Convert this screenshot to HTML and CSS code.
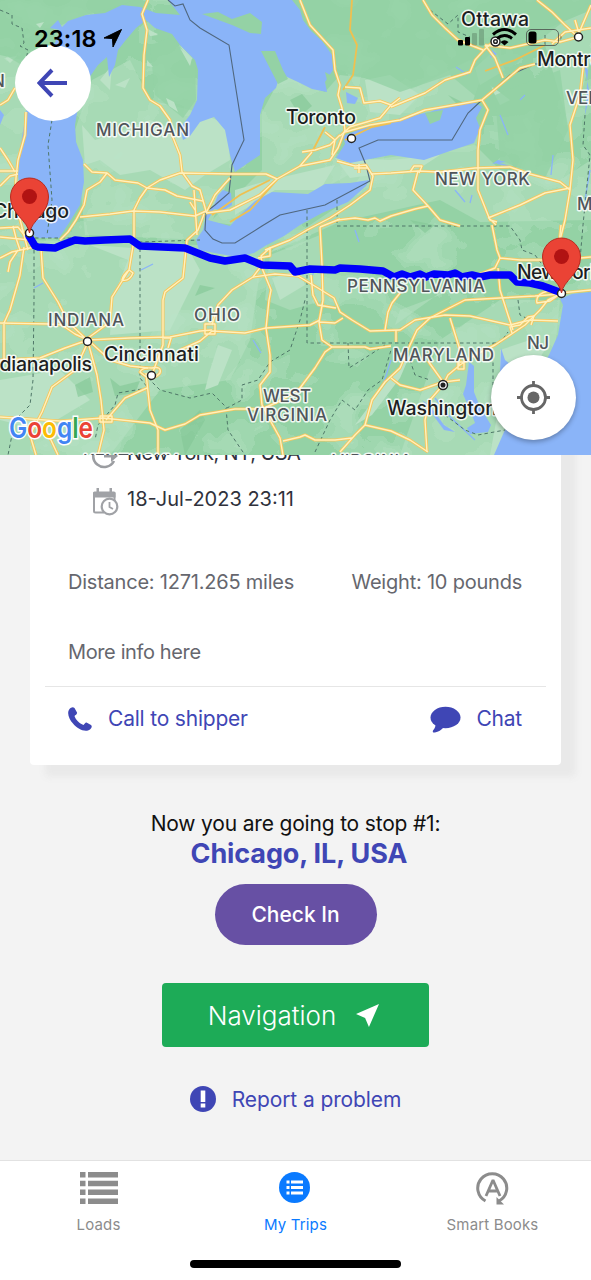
FILE: index.html
```html
<!DOCTYPE html>
<html lang="en">
<head>
<meta charset="utf-8">
<title>My Trips</title>
<link rel="stylesheet" href="styles.css">
</head>
<body>
<div class="screen">
  <header class="map-panel">
    <svg class="map" viewBox="0 0 591 455" width="591" height="455">
      <defs>
        <filter id="terrain" x="0" y="0" width="100%" height="100%" color-interpolation-filters="sRGB">
          <feTurbulence type="fractalNoise" baseFrequency="0.022 0.026" numOctaves="3" seed="8"/>
          <feColorMatrix values="0 0 0 0 .73  0 0 0 0 .89  0 0 0 0 .78  1 0 0 0 0"/>
          <feComponentTransfer><feFuncA type="discrete" tableValues="0 0 0 0 0 0 .3 .45 .6 .6 .6"/></feComponentTransfer>
        </filter>
        <g id="roads">
          <path d="M148 0L142 14L147 30L144 55L143 88L150 100L160 106L170 120L172 135L180 155L182 172L192 186L200 190L206 211"/>
          <path d="M84 164L92 172L107 173L115 180L138 183L147 188L165 190L177 196L203 201"/>
          <path d="M107 173L100 182L87 190L84 205L76 220L68 232L60 240"/>
          <path d="M147 188L160 180L180 173L232 174L266 174L277 179"/>
          <path d="M80 217L110 214L133 211L160 212L195 216L206 211M194 190L197 235M190 202L195 210"/>
          <path d="M147 188L140 198L134 210L134 240L129 270L112 297L110 322L88 338M129 270Q123 275 122 280Q129 282 133 273Z"/>
          <path d="M0 105L8 100L15 88M26 112L25 135L18 160L16 178L15 200L24 235M0 148L8 160L15 172M0 171L18 171M0 186L10 176L18 174"/>
          <path d="M0 323L50 324L62 325L75 334L88 340M41 248L43 278L58 302L68 322L85 338M24 247L20 275L10 310L4 323L4 360"/>
          <path d="M0 258L12 252L34 247M0 237L30 240M8 272L10 262L18 250M13 226L16 238L20 250M0 228L18 227L32 245M22 228L28 250"/>
          <path d="M0 360L40 358L65 348L88 340L130 338L170 337L200 331L212 330M88 340L110 360L130 366L148 368"/>
          <path d="M88 342L97 375L101 400L104 430L98 455M88 342L75 370L52 387L42 412L30 435L36 455"/>
          <path d="M0 417L60 421L103 418L150 423L165 430L185 424L200 415L235 409L262 409L282 400L300 388L315 368L325 352L332 347L365 347L370 349L391 346"/>
          <path d="M146 373L150 410L158 430L158 455M147 388L125 398L106 420M50 438L58 455M100 416h12v6h-12z"/>
          <path d="M153 372L163 345L163 300L165 292L183 278L187 240L198 230L204 214"/>
          <path d="M140 372Q142 367 152 368Q162 366 160 373Q154 380 145 376ZM164 338L171 338L168 348"/>
          <path d="M205 324h10v10h-10zM212 331L245 333L266 328L310 325L320 320M212 331L200 341L180 350M212 325L218 305L232 290L253 277L262 265L261 256L270 248L270 256L258 258"/>
          <path d="M253 277L275 274L298 276L318 288L334 298L340 312L352 320L370 331L400 330L415 320L445 315L470 316L510 325L530 320L558 321"/>
          <path d="M262 268L271 290L269 300L266 328L270 355L270 372L260 385L262 405L270 420L280 438L283 455"/>
          <path d="M320 227L322 265L323 300L319 322L322 340L332 347M311 275L313 295L318 305L336 308M319 322L335 323L343 318"/>
          <path d="M265 250L290 240L307 230L330 218L350 205L370 190L373 176L366 165L355 166L337 161M340 219L320 227M359 164v9M354 168h14"/>
          <path d="M371 174L391 173L418 171L440 172L475 168L510 167L530 174L545 178L560 182L570 190M337 220L355 218L368 220L375 218L380 221L391 216L415 209L428 206"/>
          <path d="M385 330L388 312L392 303L400 293M283 441L300 437L305 435L315 440L335 440L352 438M340 452L355 435L365 425L372 400L385 382L400 368L410 345L417 330L430 318L465 300L500 298L535 296L560 294"/>
          <path d="M365 425L391 431L410 440L428 452M492 225L497 250L500 258L495 268L480 274M500 258L520 260L560 260L591 257M498 268L500 290L508 315L513 330"/>
          <path d="M537 303Q535 294 548 291L560 294L550 301ZM560 294L548 300L540 310L525 325L513 333L495 345L475 355L460 365L448 375L443 385L430 400L425 420L427 452M450 318L460 350L459 365M458 362h6v7h-6z"/>
          <path d="M443 382L420 390L400 385L391 378M428 361L443 382M443 382L460 380M396 342L396 330M561 225L558 255M560 293L591 290M512 333L510 327L520 325L528 317L534 316L531 325"/>
          <path d="M423 0L432 15L445 28L458 40L483 50M391 107L425 93L445 80L470 72L475 60L484 50L495 40"/>
          <path d="M345 132L370 125L400 120L425 110L460 104L482 100L500 85L520 68L535 64M485 45L495 58L503 78M485 45L510 48L545 40L560 42L578 37"/>
          <path d="M482 100L488 110L480 130L478 150L478 190L490 220L497 222M488 218L520 205L545 193L570 188M490 219l6 6"/>
          <path d="M584 60L580 95L570 125L573 160L570 190L565 220L560 240M537 0L552 12L565 25L578 37M591 5L578 35M591 28L565 32L552 44M575 20L580 37"/>
          <path d="M418 171L413 190L428 206L440 220L460 226M410 172L414 166L422 166L419 173"/>
          <path d="M300 0L310 25L333 50L335 70L340 85L338 95L342 108L345 130L338 148L330 160L300 166L277 179L260 195L230 210L206 213"/>
          <path d="M345 87L360 88L364 103L380 101L391 105L400 98M391 105L380 118L350 127L340 136M302 152L315 150L330 145L340 135M325 132L335 140L332 155M312 152L300 166M206 213L215 195L230 178"/>
        </g>
        <g id="minor">
          <path d="M352 0L350 30L357 45L353 75L343 90M312 152L325 127M230 222L250 210L277 180M212 215L240 195L270 180M391 123L372 127L345 140M485 71L515 60L545 45"/>
        </g>
        <g id="pin">
          <path d="M0 0C-2-13-19-19-19-36A19 19 0 0 1 19-36C19-19 2-13 0 0Z" fill="#ea4335" stroke="#b92b20"/>
          <circle cy="-36.500" r="7.500" fill="#b11313"/>
        </g>
      </defs>
      <rect width="591" height="455" fill="#94d2a5"/>
      <g fill="#a7dab5">
        <path d="M0 55L22 60L30 110L20 170L30 240L200 245L262 258L250 340L230 380L160 390L110 455H0Z"/>
        <path d="M92 80L130 60L150 100L190 110L236 120L230 175L205 240L85 235L75 130Z"/>
        <path d="M262 112L282 75L325 92L340 75L365 78L400 95L470 60L480 80L470 110L345 130L335 158L370 163L310 196L235 225L210 222L262 170Z"/>
        <path d="M372 160L475 145L500 170L560 180L591 160V220L480 222L440 200L340 222L265 255L340 205Z"/>
        <path d="M400 455L440 340L500 300L560 300L555 350L500 455Z"/>
        <path d="M270 255L320 235L325 300L290 310L265 300ZM520 40L591 10V60L570 130L545 45Z"/>
        <path d="M400 310L440 295L470 270L430 300L395 325Z"/>
      </g>
      <g fill="#bbe2c6">
        <path d="M82 125L95 140L110 135L150 120L175 130L205 115L228 125L230 160L205 175L185 190L150 170L120 175L100 160L85 165Z"/>
        <path d="M90 245L190 252L200 270L170 330L110 335L112 300L128 260Z"/>
        <path d="M0 380L60 370L90 400L40 430L0 420Z"/>
        <path d="M235 190L270 180L335 165L320 190L275 190L235 215ZM365 80L390 75L420 95L400 115L370 112Z"/>
        <path d="M335 158L390 160L440 155L420 168L350 178ZM500 350L530 340L545 350L510 400L503 455H490L500 400Z"/>
        <path d="M355 425L385 385L410 355L400 378L372 415ZM272 278L300 270L305 285L280 300Z"/>
        <path d="M100 80L112 65L110 90ZM115 85L130 78L125 88ZM180 45L192 58L190 65ZM148 30L158 34L150 36ZM5 58L17 56L10 63ZM490 85L510 100L500 105Z"/>
        <path d="M210 370L218 345L232 350L218 385L205 390ZM475 68L495 50L505 70L480 85Z"/>
      </g>
      <rect width="591" height="455" filter="url(#terrain)"/>
      <g fill="#94d2a5">
        <path d="M0 0H135L118 6L86 15L54 28L52 60L30 70L0 52ZM303 0H591L540 40L480 100L450 75L400 92L365 78L340 72L320 40ZM150 45L170 38L195 62L196 100L183 118L155 95ZM495 95L560 70L568 130L545 178L500 160Z" opacity=".8"/>
      </g>
      <g fill="#84c897" opacity=".65">
        <path d="M75 385l15-8l3 15l-15 5zM110 378l10 8l20-5l-5 12l-20 3zM290 100l12-6l10 12l-12 10zM448 95l20 10l10 20l-15-15zM410 220l25 5l-10 8zM200 285l15 3l-20 8zM180 430l20-20l5 10l-20 35z"/>
      </g>
      <g fill="#bbe2c6">
        <path d="M180 48L192 58L190 66ZM148 29L158 35L150 36ZM147 60l6 7l-6-1zM36 24l8-2l-4 6zM166 98l8 4l4 10l-9-6z"/>
      </g>
      <g fill="#8ab4f8">
        <path d="M50 28L58 20L62 27L68 21L86 15L105 13L122 5L140 7L156 13L180 15L168 0H292L300 10L303 20L311 31L322 41L332 55L333 70L325 82L327 92L312 89L298 82L285 76L279 78L276 88L265 98L260 115L260 155L248 163L235 172L230 155L225 130L214 117L200 122L190 136L183 140L180 128L190 115L197 100L198 70L195 60L180 45L172 34L155 28L146 20L136 28L125 41L118 50L115 65L109 77L107 57L98 65L91 75L80 95L75 125L76 142L83 160L84 182L80 205L69 223L59 238L38 238L29 232L22 205L18 175L20 150L24 125L30 90L52 60L54 45L60 30Z"/>
        <path d="M206 216L214 205L218 195L223 190L231 193L232 205L224 210L214 209L208 220L230 226L240 215L255 201L272 192L308 194L325 184L350 183L369 180L366 186L348 202L322 213L300 225L284 236L265 246L254 253L238 257L220 254L199 250L196 240L203 230Z"/>
        <path d="M336 158L345 144L343 136L361 129L391 122L400 118L430 112L444 106L474 102L482 107L476 118L480 128L474 143L450 151L424 160L391 155L370 159L350 163Z"/>
        <path d="M346 92L358 98L355 104L347 103ZM591 292L572 294L560 299L563 305L558 335L549 355L520 405L504 432L494 455H591ZM501 348L505 360L515 368L500 372ZM469 362L474 366L474 392L480 407L491 425L488 432L470 434L467 428L475 423L470 410L463 394L466 385Z"/>
        <path d="M422 400L430 406L444 425L455 432L444 430ZM584 65L590 95L585 115L588 70ZM0 110L4 115L0 125ZM498 160L506 162L492 164ZM492 50L497 54L490 58Z"/>
      </g>
      <path d="M202 14L218 12L232 19L250 13L262 22L261 34L250 33L232 25ZM261 51L275 51L283 70L288 79L278 84ZM425 113L443 110L440 120L430 124ZM325 72L332 76L328 84Z" fill="#94d2a5"/>
      <g class="river">
        <path d="M34 288l9-5M141 270l12-6M468 75l-12-8M500 115l8 20M455 190l10 12M253 340l8 13M315 270l-5 10M520 100l5-5M497 163l18 5M472 195l-2 8"/>
        <path d="M391 360L383 385M435 398L448 415L475 440M355 230l4 12M553 155l-2 20M590 170L585 200"/>
      </g>
      <g class="border-dashed">
        <path d="M0 10L12 15L12 24L22 28L24 43L20 46L28 50L26 60M52 120L48 145L52 200L47 235M34 250L34 300L33 380L30 405L15 420L8 455"/>
        <path d="M35 238L100 238L140 242L200 240M140 242V378L148 388M307 210V343H391L500 343L508 332M337 200V226H510L520 240L522 250L535 255L550 275"/>
        <path d="M148 378L160 390L190 398L212 393L227 408L242 400L242 385L258 380L270 362L290 350L300 320L305 300M226 408L228 430L245 455M148 388L118 393L115 405L98 425L95 440"/>
        <path d="M315 452L330 420L342 400L355 410L368 390L382 380L391 350M348 343L349 368L365 358L385 345M585 115L583 145L590 155L583 225L580 260M493 343V385M518 300L520 315L530 320M430 10L448 24L458 15V32L470 37M545 35V48M445 415L465 430L478 435L505 430M410 360L415 375L430 380"/>
      </g>
      <path class="border-solid" d="M168 0L175 6L183 4L190 20L200 28L229 45L244 140L232 165L229 193L215 205L206 212L205 230L213 239L222 243L235 243L262 226L280 215L325 205L370 181L366 165L359 148L378 140L452 140L468 113L482 100L510 75L535 64H550"/>
      <use href="#minor" class="road-minor"/>
      <use href="#roads" class="road-case"/>
      <use href="#roads" class="road-core"/>
      <g class="towns">
        <circle cx="351.500" cy="138.500" r="4"/><circle cx="87.500" cy="341.500" r="4"/><circle cx="151.500" cy="375.500" r="4"/><circle cx="578.500" cy="37" r="4"/>
        <circle cx="443" cy="385" r="4.500"/><circle cx="443" cy="385" r="1.800" fill="#222"/>
        <circle cx="495.500" cy="41.500" r="4.500"/><circle cx="495.500" cy="41.500" r="1.800"/>
      </g>
      <path class="route" d="M29 236L35 246L38 247L55 248L62 245L75 240L85 241L105 240L130 239L140 246L185 248L200 254L210 258L225 261L245 258L262 265L290 266L295 272L310 269L335 270L340 268L360 269L383 271L394 277L402 274L410 277L420 274L426 277L434 274L448 275L455 273L462 277L472 275L480 277L490 275L510 275L517 282L530 283L543 286L562 293"/>
      <g class="label state">
        <text x="96" y="136" textLength="93">MICHIGAN</text>
        <text x="435" y="185" textLength="95">NEW YORK</text>
        <text x="48" y="326" textLength="76">INDIANA</text>
        <text x="194" y="321" textLength="46">OHIO</text>
        <text x="347" y="292" textLength="138">PENNSYLVANIA</text>
        <text x="393" y="361" textLength="101">MARYLAND</text>
        <text x="527" y="349" textLength="22">NJ</text>
        <text x="263" y="402" textLength="48">WEST</text>
        <text x="247" y="421" textLength="80">VIRGINIA</text>
        <text x="566" y="104">VERMONT</text>
        <text x="577" y="210">MA</text>
        <text x="-8" y="87">N</text>
        <text x="83" y="467" textLength="95">KENTUCKY</text>
        <text x="332" y="467" textLength="80">VIRGINIA</text>
      </g>
      <g class="label city">
        <text x="286" y="124" textLength="70">Toronto</text>
        <text x="461" y="26" textLength="68">Ottawa</text>
        <text x="537" y="66" textLength="80">Montreal</text>
        <text x="-7" y="218" textLength="76">Chicago</text>
        <text x="-17" y="371" textLength="109">Indianapolis</text>
        <text x="104" y="361" textLength="95">Cincinnati</text>
        <text x="387" y="415" textLength="110">Washington</text>
        <text x="517" y="279" textLength="84">New York</text>
      </g>
      <g class="towns"><circle cx="29.500" cy="233" r="4"/><circle cx="561.500" cy="293.500" r="4"/></g>
      <use href="#pin" x="29.500" y="233"/>
      <use href="#pin" x="561.500" y="293"/>
      <text class="google" x="9" y="438" textLength="84" lengthAdjust="spacingAndGlyphs"><tspan fill="#4285f4">G</tspan><tspan fill="#ea4335">o</tspan><tspan fill="#fbbc05">o</tspan><tspan fill="#4285f4">g</tspan><tspan fill="#34a853">l</tspan><tspan fill="#ea4335">e</tspan></text>
    </svg>
    <button class="back" aria-label="Back">
      <svg viewBox="0 0 32 32" width="32" height="32"><path d="M30 16H2M15 3L2.500 16L15 29" fill="none" stroke="#3f46b5" stroke-width="4"/></svg>
    </button>
    <div class="status">
      <span class="clock">23:18</span>
      <svg class="status-arrow" viewBox="0 0 18 18" width="18" height="18"><path d="M17.500.5L0 9L8.500 9.500L9 18Z" stroke="#000" stroke-linejoin="round"/></svg>
      <svg class="status-icons" viewBox="0 0 106 22" width="106" height="22">
        <rect x="0" y="13" width="5" height="5.500" rx="1"/><rect x="7" y="10" width="5" height="8.500" rx="1"/>
        <rect x="14" y="6" width="5" height="12.500" rx="1" opacity=".18"/><rect x="21" y="2" width="5" height="16.500" rx="1" opacity=".18"/>
        <g fill="none" stroke="#000" stroke-width="3"><path d="M35 7.500Q46.500-2.500 58 7.500M39 11.500Q46.500 5.500 54 11.500"/></g><path d="M42.500 15Q46.500 11.500 50.500 15L46.500 18.500Z"/>
        <rect x="68.500" y="2.500" width="32" height="16" rx="4.500" fill="none" stroke="#444" opacity=".75"/><rect x="70.500" y="4.500" width="8" height="12" rx="2.500"/><path d="M102.500 8q2 2.500 0 5z" opacity=".5"/>
      </svg>
    </div>
    <button class="locate" aria-label="My location">
      <svg viewBox="0 0 34 34" width="34" height="34"><g fill="none" stroke="#666" stroke-width="2.800"><circle cx="16.500" cy="16.500" r="12"/><path d="M16.500 0V5.500M16.500 27.500V33M0 16.500H5.500M27.500 16.500H33"/></g><circle cx="16.500" cy="16.500" r="6" fill="#666"/></svg>
    </button>
  </header>

  <main class="content">
    <section class="card">
      <div class="row place">
        <svg class="row-icon" viewBox="0 0 28 28" width="28" height="28"><path d="M23 19A11 11 0 1 1 23 9" fill="none" stroke="#9b9da1" stroke-width="2.600"/><path d="M13 12.500H20V8L27 14L20 20V15.500H13Z" fill="#9b9da1"/></svg>
        <span class="place-text">New York, NY, USA</span>
      </div>
      <div class="row date">
        <svg class="row-icon" viewBox="0 0 28 28" width="28" height="28">
          <path d="M13 24.500H4.500Q3 24.500 3 23V5.500H23.500V14" fill="none" stroke="#a0a2a6" stroke-width="2"/><path d="M2 5Q2 3.500 3.500 3.500H23Q24.500 3.500 24.500 5V9.500H2ZM5.500 0H8V5H5.500ZM18.500 0H21V5H18.500Z" fill="#a0a2a6"/>
          <circle cx="18.500" cy="18.500" r="7.800" fill="#fff" stroke="#a0a2a6" stroke-width="2.200"/><path d="M18.500 14V19L22 21" fill="none" stroke="#a0a2a6" stroke-width="1.800"/>
        </svg>
        <span class="date-text">18-Jul-2023 23:11</span>
      </div>
      <div class="facts"><span class="distance">Distance: 1271.265 miles</span><span class="weight">Weight: 10 pounds</span></div>
      <p class="more">More info here</p>
      <div class="actions">
        <a class="action"><svg viewBox="0 0 24 24" width="24" height="24"><path d="M1.500 2C3 .3 5-.5 6.500 1L9 5.500C9.500 7 7.500 8 6.500 9C7.500 12.500 11.500 16.500 15.500 18C16.500 17 17.300 15.300 18.500 15.500L23 18C24.500 19.500 23.500 21 22 22.500C17 26 9 21.500 5 16.500C1 12-1.500 6 1.500 2Z" fill="#3f46b5"/></svg><span class="call-text">Call to shipper</span></a>
        <a class="action chat"><svg viewBox="0 0 32 28" width="32" height="28"><ellipse cx="16.500" cy="12.500" rx="15" ry="10.700" fill="#3f46b5"/><path d="M6.500 18Q7 22 4 25.500Q3 28 6 27.500Q11 26.500 15 22Z" fill="#3f46b5"/></svg><span class="chat-text">Chat</span></a>
      </div>
    </section>

    <p class="going">Now you are going to stop #1:</p>
    <p class="destination">Chicago, IL, USA</p>
    <button class="check-in">Check In</button>
    <button class="navigation"><span class="nav-text">Navigation</span><svg viewBox="0 0 24 24" width="23" height="23"><path d="M24 0L0 10.500L9.500 14.500L13.500 24Z" fill="#fff"/></svg></button>
    <a class="report"><svg viewBox="0 0 26 26" width="26" height="26"><circle cx="13" cy="13" r="13" fill="#3f46b5"/><rect x="10.700" y="4.500" width="4.600" height="11.500" fill="#fff"/><rect x="10.700" y="17.500" width="4.600" height="4" fill="#fff"/></svg><span class="report-text">Report a problem</span></a>
  </main>

  <nav class="tabs">
    <a class="tab"><svg viewBox="0 0 38 34" width="38" height="34"><path d="M0 1H5.500V6.500H0ZM8 1H38V6.500H8ZM0 9.700H5.500V15.200H0ZM8 9.700H38V15.200H8ZM0 18.500H5.500V24H0ZM8 18.500H38V24H8ZM0 27.500H5.500V33H0ZM8 27.500H38V33H8Z" fill="#8c8c8c"/></svg><span class="loads-text">Loads</span></a>
    <a class="tab active"><svg viewBox="0 0 34 34" width="34" height="34"><circle cx="15.500" cy="16.500" r="15.500" fill="#0a7aff"/><path d="M7.500 9.500H10.500V12.500H7.500ZM12 9.500H24V12.500H12ZM7.500 15H10.500V18H7.500ZM12 15H24V18H12ZM7.500 20.500H10.500V23.500H7.500ZM12 20.500H24V23.500H12Z" fill="#fff"/></svg><span class="trips-text">My Trips</span></a>
    <a class="tab"><svg viewBox="0 0 34 34" width="34" height="34"><path d="M9.500 30A14.500 14.500 0 1 1 23 30" fill="none" stroke="#8c8c8c" stroke-width="3"/><path d="M20.500 26V33.500H28Z" fill="#8c8c8c"/><path d="M10 25L17 9L24 25M12.500 20H21.500" fill="none" stroke="#8c8c8c" stroke-width="2.800" stroke-linejoin="bevel"/></svg><span class="books-text">Smart Books</span></a>
    <div class="home-bar"></div>
  </nav>
</div>
</body>
</html>
```
FILE: styles.css
```css
* { box-sizing: border-box; }
body { margin: 0; font-family: Inter, "Liberation Sans", sans-serif; }
p { margin: 0; }
button { border: 0; padding: 0; font: inherit; display: flex; align-items: center; justify-content: center; }
svg { display: block; flex: none; }
.screen { width: 591px; height: 1280px; display: flex; flex-direction: column; overflow: hidden; background: #f3f3f3; }

.map-panel { position: relative; z-index: 1; flex: none; height: 455px; overflow: hidden; }
.road-case { fill: none; stroke: #f6c65c; stroke-width: 3.1; stroke-linejoin: round; }
.road-core { fill: none; stroke: #fff1bd; stroke-width: 1.4; stroke-linejoin: round; }
.road-minor { fill: none; stroke: #efc050; stroke-width: 1.8; }
.river { fill: none; stroke: #8ab4f8; stroke-width: 1.3; }
.border-dashed { fill: none; stroke: #4f7768; stroke-width: 1; stroke-dasharray: 3.5 3; }
.border-solid { fill: none; stroke: #50677e; stroke-width: 1.1; }
.route { fill: none; stroke: #0000fa; stroke-width: 7.5; stroke-linejoin: round; stroke-linecap: round; }
.towns { fill: #fff; stroke: #222; stroke-width: 1.5; }
.label { paint-order: stroke; stroke: #fff; stroke-width: 3px; stroke-opacity: .85; stroke-linejoin: round; }
.state { font-size: 17px; font-weight: 500; fill: #50555a; }
.city { font-size: 19.5px; font-weight: 500; fill: #1d1f22; }
.google { font-size: 28px; font-weight: 600; paint-order: stroke; stroke: #fff; stroke-width: 3px; }
.back { position: absolute; left: 15px; top: 45px; width: 76px; height: 76px; border-radius: 50%; background: #fff; }
.status { position: absolute; left: 34px; right: 27px; top: 24px; height: 28px; display: flex; align-items: center; }
.clock { font-size: 23.5px; font-weight: 600; letter-spacing: .1px; }
.status-arrow { margin-left: 7px; }
.status-icons { margin-left: auto; }
.locate { position: absolute; left: 491px; top: 355px; width: 85px; height: 85px; border-radius: 50%; background: #fff; box-shadow: 0 2px 5px rgba(0,0,0,.3); }

.content { flex: 1; min-height: 0; display: flex; flex-direction: column; align-items: center; }
.card { flex: none; align-self: flex-start; width: 531px; height: 330px; margin: -20px 0 0 30px; padding: 0 15px; background: #fff; border-radius: 4px; box-shadow: 15px 12px 7px #e9e9e9; }
.row { display: flex; align-items: center; gap: 8px; padding-left: 46px; color: #30323c; font-size: 20px; }
.place { height: 36px; letter-spacing: -.6px; }
.date { height: 36px; margin-top: 10px; }
.row-icon { position: relative; top: 3px; }
.facts { display: flex; justify-content: space-between; margin: 53px 24px 0 23px; line-height: 24px; font-size: 20px; letter-spacing: -.22px; color: #66676e; }
.more { margin: 46px 0 0 23px; line-height: 24px; font-size: 20px; letter-spacing: -.38px; color: #66676e; }
.actions { display: flex; justify-content: space-between; align-items: center; height: 64px; margin-top: 22px; padding: 0 24px 0 23px; border-top: 1px solid #e6e6e6; font-size: 21px; letter-spacing: -.2px; color: #3f46b5; }
.action { display: flex; align-items: center; gap: 16px; }
.chat { gap: 15px; }
.going { margin-top: 45px; line-height: 28px; font-size: 21px; letter-spacing: -.18px; color: #111; }
.destination { margin: 2px 0 0 7px; line-height: 28px; font-size: 27px; font-weight: 700; letter-spacing: -.12px; color: #3f46b5; }
.check-in { margin: 16px 0 0; width: 162px; height: 61px; border-radius: 31px; background: #6750a4; color: #fff; font-size: 21px; font-weight: 500; }
.navigation { margin-top: 38px; width: 267px; height: 64px; gap: 20px; padding-right: 4px; border-radius: 4px; background: #1dab57; color: #fff; font-size: 26px; font-weight: 300; letter-spacing: 0; }
.report { display: flex; align-items: center; gap: 16px; height: 28px; margin-top: 38px; font-size: 21px; letter-spacing: -.1px; color: #3f46b5; }

.tabs { position: relative; flex: none; height: 120px; padding-top: 10px; display: grid; grid-template-columns: repeat(3, 197px); align-items: start; background: #fff; border-top: 1px solid #e2e2e2; }
.tab { display: flex; flex-direction: column; align-items: center; gap: 10px; font-size: 15px; line-height: 20px; letter-spacing: .15px; color: #8c8c8c; }
.active { color: #0a7aff; }
.home-bar { position: absolute; left: 190px; bottom: 12px; width: 211px; height: 8px; border-radius: 4px; background: #000; }
```
